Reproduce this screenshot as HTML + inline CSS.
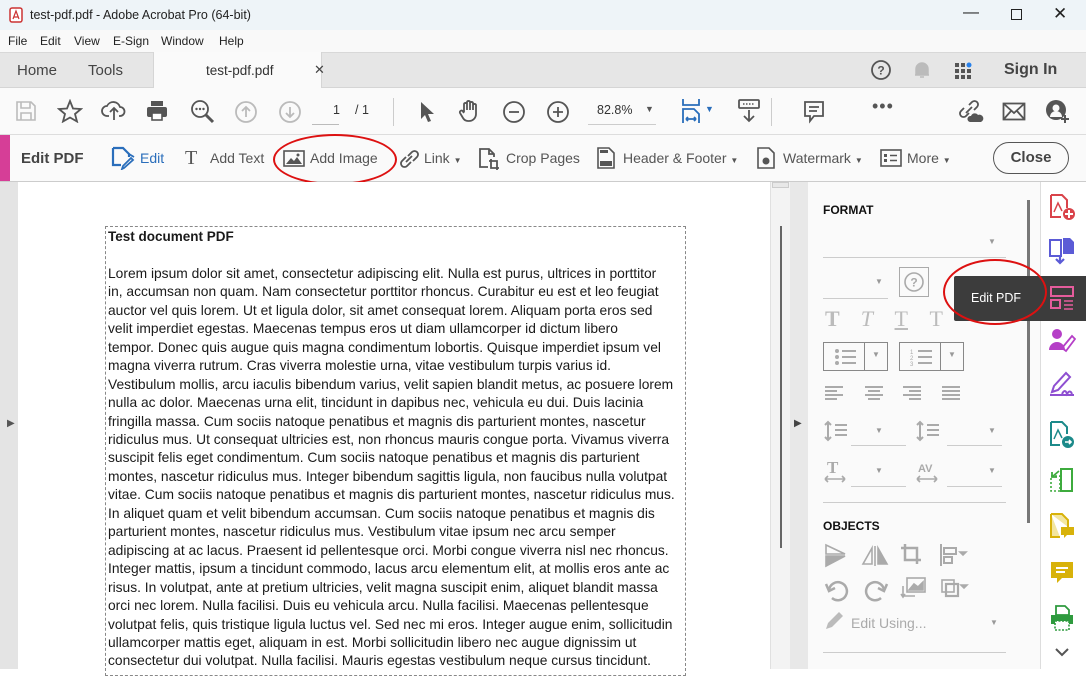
<!DOCTYPE html>
<html><head><meta charset="utf-8"><style>
*{box-sizing:border-box;margin:0;padding:0}
body{width:1086px;height:669px;overflow:hidden;font-family:"Liberation Sans",sans-serif;background:#fff;position:relative;color:#333}
.abs{position:absolute}
.title{left:0;top:0;width:1086px;height:30px;background:#eef4f8;font-size:12.5px;color:#222}
.menu{left:0;top:30px;width:1086px;height:22px;background:#f9f9f9;font-size:12px;color:#222}
.tabs{left:0;top:52px;width:1086px;height:36px;background:#e6e6e6;border-top:1px solid #d8d8d8;border-bottom:1px solid #d5d5d5}
.tb{left:0;top:88px;width:1086px;height:47px;background:#fafafa;border-bottom:1px solid #ddd}
.eb{left:0;top:135px;width:1086px;height:47px;background:#fafafa;border-bottom:1px solid #ccc;font-size:14px;color:#555}
.ic{stroke:#555;fill:none;stroke-width:1.8}
.doc{left:18px;top:182px;width:752px;height:487px;background:#fff}
.lines{left:108px;top:228px;font-size:13.8px;line-height:18.45px;color:#1a1a1a;white-space:nowrap;letter-spacing:0}
.panel{left:808px;top:182px;width:232px;height:487px;background:#fafafa}
</style></head><body>
<div class="abs title">
 <svg class="abs" style="left:9px;top:7px" width="14" height="16"><rect x="1" y="1" width="12" height="14" rx="2" fill="#fff" stroke="#c33" stroke-width="1.5"/><path d="M4 12 L7 4 L10 12 M5 10 H9" stroke="#c33" fill="none" stroke-width="1.2"/></svg>
 <span class="abs" style="left:30px;top:8px">test-pdf.pdf - Adobe Acrobat Pro (64-bit)</span>
 <span class="abs" style="left:963px;top:4px;font-size:16px">—</span>
 <span class="abs" style="left:1011px;top:9px;width:11px;height:11px;border:1.3px solid #222"></span>
 <span class="abs" style="left:1053px;top:4px;font-size:17px">✕</span>
</div>
<div class="abs menu">
 <span class="abs" style="left:8px;top:4px">File</span><span class="abs" style="left:40px;top:4px">Edit</span><span class="abs" style="left:74px;top:4px">View</span><span class="abs" style="left:113px;top:4px">E-Sign</span><span class="abs" style="left:161px;top:4px">Window</span><span class="abs" style="left:219px;top:4px">Help</span>
</div>
<div class="abs tabs">
 <span class="abs" style="left:17px;top:9px;font-size:15px;color:#444">Home</span>
 <span class="abs" style="left:88px;top:9px;font-size:15px;color:#444">Tools</span>
 <div class="abs" style="left:153px;top:-1px;width:169px;height:36px;background:#fafafa;border-left:1px solid #d5d5d5;border-right:1px solid #d5d5d5"></div>
 <span class="abs" style="left:206px;top:10px;font-size:13.5px;color:#333">test-pdf.pdf</span>
 <span class="abs" style="left:314px;top:9px;font-size:13px;color:#444">✕</span>
 <svg class="abs" style="left:870px;top:6px" width="22" height="22"><circle cx="11" cy="11" r="9" fill="none" stroke="#555" stroke-width="1.8"/><text x="11" y="15.5" text-anchor="middle" font-size="12" font-weight="bold" fill="#555" font-family="Liberation Sans">?</text></svg>
 <svg class="abs" style="left:913px;top:7px" width="18" height="20"><path d="M3 15 V9 a6 6 0 0 1 12 0 V15 Z M2 15 H16 M7 17 h4" fill="#bbb" stroke="#bbb" stroke-width="1.5"/></svg>
 <svg class="abs" style="left:953px;top:7px" width="22" height="20"><g fill="#555"><rect x="2" y="3" width="4" height="4"/><rect x="8" y="3" width="4" height="4"/><rect x="2" y="9" width="4" height="4"/><rect x="8" y="9" width="4" height="4"/><rect x="14" y="9" width="4" height="4"/><rect x="2" y="15" width="4" height="4"/><rect x="8" y="15" width="4" height="4"/><rect x="14" y="15" width="4" height="4"/></g><circle cx="16" cy="5" r="2.5" fill="#2680eb"/></svg>
 <span class="abs" style="left:1004px;top:8px;font-size:16px;font-weight:bold;color:#444">Sign In</span>
</div>
<div class="abs tb">
 <svg class="abs" style="left:15px;top:12px" width="22" height="22"><path d="M2 2 H16 L20 6 V20 H2 Z M6 2 V8 H15 V2 M6 20 V13 H16 V20" fill="none" stroke="#bbb" stroke-width="1.6"/></svg>
 <svg class="abs" style="left:57px;top:11px" width="26" height="24"><path d="M13 2 L16 9.5 L24 10 L18 15 L20 22.5 L13 18.5 L6 22.5 L8 15 L2 10 L10 9.5 Z" class="ic"/></svg>
 <svg class="abs" style="left:101px;top:12px" width="26" height="22"><path d="M8 16 H6 a5 5 0 0 1 0-10 a7 7 0 0 1 13 1 a4.5 4.5 0 0 1 0 9 H18 M13 20 V9 M9 12 L13 8 L17 12" class="ic"/></svg>
 <svg class="abs" style="left:145px;top:11px" width="24" height="24"><path d="M6 2 H18 V7 H6 Z" fill="#555"/><rect x="2" y="8" width="20" height="10" rx="2" fill="#555"/><rect x="7" y="14" width="10" height="7" fill="#fff" stroke="#555" stroke-width="1.6"/></svg>
 <svg class="abs" style="left:190px;top:11px" width="26" height="26"><circle cx="10" cy="10" r="8" class="ic" stroke-width="2.2"/><path d="M16 16 L23 23" stroke="#555" stroke-width="3"/><circle cx="6.5" cy="10" r="1.2" fill="#555"/><circle cx="10" cy="10" r="1.2" fill="#555"/><circle cx="13.5" cy="10" r="1.2" fill="#555"/></svg>
 <svg class="abs" style="left:234px;top:12px" width="24" height="24"><circle cx="12" cy="12" r="10" fill="none" stroke="#bbb" stroke-width="1.8"/><path d="M12 17 V7 M8 11 L12 7 L16 11" fill="none" stroke="#bbb" stroke-width="1.8"/></svg>
 <svg class="abs" style="left:278px;top:12px" width="24" height="24"><circle cx="12" cy="12" r="10" fill="none" stroke="#bbb" stroke-width="1.8"/><path d="M12 7 V17 M8 13 L12 17 L16 13" fill="none" stroke="#bbb" stroke-width="1.8"/></svg>
 <span class="abs" style="left:333px;top:15px;font-size:12.5px;color:#333">1</span>
 <div class="abs" style="left:312px;top:36px;width:27px;border-top:1px solid #bbb"></div>
 <span class="abs" style="left:355px;top:15px;font-size:12.5px;color:#333">/ 1</span>
 <div class="abs" style="left:393px;top:10px;height:28px;border-left:1px solid #ccc"></div>
 <svg class="abs" style="left:418px;top:12px" width="18" height="24"><path d="M3 2 L3 19 L7 15 L10 22 L13 21 L10 14 L16 14 Z" fill="#555"/></svg>
 <svg class="abs" style="left:457px;top:10px" width="26" height="26"><path d="M7 14 V6 a1.6 1.6 0 0 1 3 0 V12 V4 a1.6 1.6 0 0 1 3 0 V12 V5 a1.6 1.6 0 0 1 3 0 V12 V7 a1.6 1.6 0 0 1 3 0 V16 a7 7 0 0 1-7 7 h-1 a6 6 0 0 1-5-3 L3 15 a1.6 1.6 0 0 1 3-1.5 L7 15" class="ic" stroke-width="1.6"/></svg>
 <svg class="abs" style="left:502px;top:12px" width="24" height="24"><circle cx="12" cy="12" r="10" class="ic"/><path d="M7 12 H17" class="ic"/></svg>
 <svg class="abs" style="left:546px;top:12px" width="24" height="24"><circle cx="12" cy="12" r="10" class="ic"/><path d="M7 12 H17 M12 7 V17" class="ic"/></svg>
 <span class="abs" style="left:597px;top:15px;font-size:12.5px;color:#333">82.8%</span>
 <span class="abs" style="left:645px;top:16px;font-size:9px;color:#555">▼</span>
 <div class="abs" style="left:588px;top:36px;width:68px;border-top:1px solid #ccc"></div>
 <svg class="abs" style="left:681px;top:10px" width="22" height="26"><path d="M2 1 V7 H18 V1 M2 25 V11 H13 L18 16 V25 M5 21 H15 M5 21 l2-2 M5 21 l2 2 M15 21 l-2-2 M15 21 l-2 2" fill="none" stroke="#2a6ebb" stroke-width="1.8"/></svg>
 <span class="abs" style="left:705px;top:16px;font-size:9px;color:#2a6ebb">▼</span>
 <svg class="abs" style="left:737px;top:10px" width="24" height="26"><rect x="2" y="2" width="20" height="8" rx="1" fill="none" stroke="#555" stroke-width="1.8"/><path d="M6 6 h12" stroke="#555" stroke-dasharray="1.5 1.5" stroke-width="1.5"/><path d="M12 12 V23 M7 18 L12 23 L17 18" class="ic"/></svg>
 <div class="abs" style="left:771px;top:10px;height:28px;border-left:1px solid #ccc"></div>
 <svg class="abs" style="left:803px;top:12px" width="22" height="24"><path d="M2 2 H20 V16 H11 L7 21 V16 H2 Z M6 7 H16 M6 11 H14" class="ic"/></svg>
 <span class="abs" style="left:872px;top:8px;font-size:18px;color:#555;letter-spacing:1px">•••</span>
 <svg class="abs" style="left:956px;top:11px" width="28" height="26"><path d="M10 14 L16 8 M8 9 L5 12 a3.5 3.5 0 0 0 5 5 L13 14 M13 6 L16 3 a3.5 3.5 0 0 1 5 5 L18 11" class="ic"/><path d="M14 23 a3 3 0 0 1 1-6 a4 4 0 0 1 7-1 a3.5 3.5 0 0 1 3 7 Z" fill="#555"/></svg>
 <svg class="abs" style="left:1002px;top:14px" width="24" height="20"><rect x="1.5" y="1.5" width="21" height="16" fill="none" stroke="#555" stroke-width="1.8"/><path d="M1.5 1.5 L12 11 L22.5 1.5 M1.5 17.5 L9 9 M22.5 17.5 L15 9" class="ic" stroke-width="1.5"/></svg>
 <svg class="abs" style="left:1045px;top:11px" width="26" height="26"><circle cx="11" cy="11" r="10" fill="#555"/><circle cx="11" cy="9" r="3.5" fill="#fafafa"/><path d="M5 18 a6 6 0 0 1 12 0" fill="#fafafa"/><path d="M20 16 V24 M16 20 H24" stroke="#555" stroke-width="2"/></svg>
</div>
<div class="abs eb">
 <div class="abs" style="left:0;top:0;width:10px;height:46px;background:#d63e97"></div>
 <span class="abs" style="left:21px;top:15px;font-size:15px;font-weight:bold;color:#444">Edit PDF</span>
 <svg class="abs" style="left:110px;top:11px" width="26" height="24"><path d="M3 2 H13 L19 8 V11 M3 2 V19 H11" fill="none" stroke="#2a6ebb" stroke-width="2.2"/><path d="M19 8 L24 11 M14 22 L12 23 L13 20 L21 12 L23 14 Z" fill="none" stroke="#2a6ebb" stroke-width="1.8"/></svg>
 <span class="abs" style="left:140px;top:15px;color:#2a6ebb">Edit</span>
 <span class="abs" style="left:185px;top:12px;font-family:'Liberation Serif',serif;font-size:20px;color:#555">T</span>
 <span class="abs" style="left:210px;top:15px">Add Text</span>
 <svg class="abs" style="left:283px;top:15px" width="22" height="17"><rect x="1" y="1" width="20" height="15" fill="none" stroke="#555" stroke-width="1.6"/><path d="M3 14 L8 8 L11 11 L14 7 L19 14 Z" fill="#555"/><circle cx="15" cy="5" r="1.5" fill="#555"/></svg>
 <span class="abs" style="left:310px;top:15px">Add Image</span>
 <svg class="abs" style="left:398px;top:13px" width="22" height="22"><path d="M8 14 L14 8 M8 9 L4 13 a3.5 3.5 0 0 0 5 5 L13 14 M10 8 L14 4 a3.5 3.5 0 0 1 5 5 L15 13" class="ic"/></svg>
 <span class="abs" style="left:424px;top:15px">Link <span style="font-size:8px">▼</span></span>
 <svg class="abs" style="left:478px;top:12px" width="22" height="24"><path d="M10 20 H2 V2 H11 L16 7 V10 M11 2 V7 H16 M13 12 V21 H21 M11 14 H19 V23" class="ic" stroke-width="1.6"/></svg>
 <span class="abs" style="left:506px;top:15px">Crop Pages</span>
 <svg class="abs" style="left:597px;top:12px" width="18" height="22"><path d="M1 1 H12 L17 6 V21 H1 Z" fill="none" stroke="#555" stroke-width="1.6"/><rect x="3" y="14" width="12" height="5" fill="#555"/><rect x="3" y="3" width="8" height="3" fill="#555"/></svg>
 <span class="abs" style="left:623px;top:15px">Header &amp; Footer <span style="font-size:8px">▼</span></span>
 <svg class="abs" style="left:757px;top:12px" width="18" height="22"><path d="M1 1 H12 L17 6 V21 H1 Z" fill="none" stroke="#555" stroke-width="1.6"/><circle cx="9" cy="14" r="3.5" fill="#555"/></svg>
 <span class="abs" style="left:783px;top:15px">Watermark <span style="font-size:8px">▼</span></span>
 <svg class="abs" style="left:880px;top:14px" width="22" height="18"><rect x="1" y="1" width="20" height="16" fill="none" stroke="#555" stroke-width="1.6"/><rect x="4" y="5" width="3" height="3" fill="#555"/><rect x="4" y="10" width="3" height="3" fill="#555"/><path d="M10 6.5 H17 M10 11.5 H17" stroke="#555" stroke-width="1.6"/></svg>
 <span class="abs" style="left:907px;top:15px">More <span style="font-size:8px">▼</span></span>
 <div class="abs" style="left:993px;top:7px;width:76px;height:32px;border:1.3px solid #555;border-radius:16px;font-weight:bold;color:#444;font-size:15px;text-align:center;line-height:29px">Close</div>
 <div class="abs" style="left:273px;top:-1px;width:124px;height:51px;border:2px solid #d11;border-radius:50%"></div>
</div>
<div class="abs" style="left:0;top:182px;width:18px;height:487px;background:#e4e4e4"></div>
<span class="abs" style="left:7px;top:418px;font-size:10px;color:#555">▶</span>
<div class="abs doc"></div>
<div class="abs" style="left:105px;top:226px;width:581px;height:450px;border:1px dashed #888"></div>
<div class="abs lines">
<div style="font-weight:bold;font-size:13.5px">Test document PDF</div>
<div>&nbsp;</div>
<div>Lorem ipsum dolor sit amet, consectetur adipiscing elit. Nulla est purus, ultrices in porttitor</div>
<div>in, accumsan non quam. Nam consectetur porttitor rhoncus. Curabitur eu est et leo feugiat</div>
<div>auctor vel quis lorem. Ut et ligula dolor, sit amet consequat lorem. Aliquam porta eros sed</div>
<div>velit imperdiet egestas. Maecenas tempus eros ut diam ullamcorper id dictum libero</div>
<div>tempor. Donec quis augue quis magna condimentum lobortis. Quisque imperdiet ipsum vel</div>
<div>magna viverra rutrum. Cras viverra molestie urna, vitae vestibulum turpis varius id.</div>
<div>Vestibulum mollis, arcu iaculis bibendum varius, velit sapien blandit metus, ac posuere lorem</div>
<div>nulla ac dolor. Maecenas urna elit, tincidunt in dapibus nec, vehicula eu dui. Duis lacinia</div>
<div>fringilla massa. Cum sociis natoque penatibus et magnis dis parturient montes, nascetur</div>
<div>ridiculus mus. Ut consequat ultricies est, non rhoncus mauris congue porta. Vivamus viverra</div>
<div>suscipit felis eget condimentum. Cum sociis natoque penatibus et magnis dis parturient</div>
<div>montes, nascetur ridiculus mus. Integer bibendum sagittis ligula, non faucibus nulla volutpat</div>
<div>vitae. Cum sociis natoque penatibus et magnis dis parturient montes, nascetur ridiculus mus.</div>
<div>In aliquet quam et velit bibendum accumsan. Cum sociis natoque penatibus et magnis dis</div>
<div>parturient montes, nascetur ridiculus mus. Vestibulum vitae ipsum nec arcu semper</div>
<div>adipiscing at ac lacus. Praesent id pellentesque orci. Morbi congue viverra nisl nec rhoncus.</div>
<div>Integer mattis, ipsum a tincidunt commodo, lacus arcu elementum elit, at mollis eros ante ac</div>
<div>risus. In volutpat, ante at pretium ultricies, velit magna suscipit enim, aliquet blandit massa</div>
<div>orci nec lorem. Nulla facilisi. Duis eu vehicula arcu. Nulla facilisi. Maecenas pellentesque</div>
<div>volutpat felis, quis tristique ligula luctus vel. Sed nec mi eros. Integer augue enim, sollicitudin</div>
<div>ullamcorper mattis eget, aliquam in est. Morbi sollicitudin libero nec augue dignissim ut</div>
<div>consectetur dui volutpat. Nulla facilisi. Mauris egestas vestibulum neque cursus tincidunt.</div>
</div>
<div class="abs" style="left:770px;top:182px;width:20px;height:487px;background:#f3f3f3;border-left:1px solid #e0e0e0"></div>
<div class="abs" style="left:772px;top:182px;width:17px;height:6px;background:#e8e8e8;border:1px solid #ccc"></div>
<div class="abs" style="left:780px;top:226px;width:2px;height:322px;background:#666"></div>
<div class="abs" style="left:790px;top:182px;width:18px;height:487px;background:#e8e8e8"></div>
<span class="abs" style="left:794px;top:418px;font-size:10px;color:#444">▶</span>
<div class="abs panel">
 <span class="abs" style="left:15px;top:21px;font-size:12px;font-weight:bold;color:#111">FORMAT</span>
 <span class="abs" style="left:180px;top:55px;font-size:8px;color:#999">▼</span>
 <div class="abs" style="left:15px;top:75px;width:183px;border-top:1px solid #ccc"></div>
 <span class="abs" style="left:67px;top:95px;font-size:8px;color:#999">▼</span>
 <div class="abs" style="left:15px;top:116px;width:65px;border-top:1px solid #ccc"></div>
 <div class="abs" style="left:91px;top:85px;width:30px;height:30px;border:1px solid #aaa"></div>
 <svg class="abs" style="left:95px;top:89px" width="22" height="22"><circle cx="11" cy="11" r="9" fill="none" stroke="#aaa" stroke-width="1.6"/><text x="11" y="15.5" text-anchor="middle" font-size="12" font-weight="bold" fill="#aaa" font-family="Liberation Sans">?</text></svg>
 <div class="abs" style="left:17px;top:124px;font-family:'Liberation Serif',serif;font-size:22px;color:#bbb;font-weight:bold;word-spacing:16px">T <i style="font-weight:normal">T</i> <u style="font-weight:normal">T</u> <span style="font-weight:normal">T</span></div>
 <div class="abs" style="left:15px;top:160px;width:65px;height:29px;border:1px solid #888"></div><div class="abs" style="left:56px;top:160px;height:29px;border-left:1px solid #888"></div>
 <svg class="abs" style="left:26px;top:166px" width="24" height="18"><g fill="#aaa"><circle cx="3" cy="3" r="2"/><circle cx="3" cy="9" r="2"/><circle cx="3" cy="15" r="2"/><rect x="8" y="2" width="14" height="2"/><rect x="8" y="8" width="14" height="2"/><rect x="8" y="14" width="14" height="2"/></g></svg>
 <span class="abs" style="left:64px;top:168px;font-size:8px;color:#999">▼</span>
 <div class="abs" style="left:91px;top:160px;width:65px;height:29px;border:1px solid #888"></div><div class="abs" style="left:132px;top:160px;height:29px;border-left:1px solid #888"></div>
 <svg class="abs" style="left:102px;top:166px" width="24" height="18"><g fill="#aaa"><rect x="8" y="2" width="14" height="2"/><rect x="8" y="8" width="14" height="2"/><rect x="8" y="14" width="14" height="2"/><text x="0" y="6" font-size="6">1</text><text x="0" y="12" font-size="6">2</text><text x="0" y="18" font-size="6">3</text></g></svg>
 <span class="abs" style="left:140px;top:168px;font-size:8px;color:#999">▼</span>
 <svg class="abs" style="left:15px;top:203px" width="180" height="16"><g stroke="#aaa" stroke-width="2"><path d="M2 2 H20 M2 6 H14 M2 10 H20 M2 14 H14"/><path d="M42 2 H60 M45 6 H57 M42 10 H60 M45 14 H57"/><path d="M80 2 H98 M86 6 H98 M80 10 H98 M86 14 H98"/><path d="M119 2 H137 M119 6 H137 M119 10 H137 M119 14 H137"/></g></svg>
 <svg class="abs" style="left:15px;top:238px" width="30" height="22"><path d="M5 2 V20 M2 5 L5 2 L8 5 M2 17 L5 20 L8 17 M12 5 H24 M12 10 H24 M12 15 H24" stroke="#aaa" stroke-width="2" fill="none"/></svg>
 <span class="abs" style="left:67px;top:244px;font-size:8px;color:#999">▼</span>
 <div class="abs" style="left:43px;top:263px;width:55px;border-top:1px solid #ccc"></div>
 <svg class="abs" style="left:107px;top:238px" width="30" height="22"><path d="M5 2 V20 M2 5 L5 2 L8 5 M2 17 L5 20 L8 17 M12 5 H24 M12 10 H24 M12 15 H24" stroke="#aaa" stroke-width="2" fill="none"/></svg>
 <span class="abs" style="left:180px;top:244px;font-size:8px;color:#999">▼</span>
 <div class="abs" style="left:139px;top:263px;width:55px;border-top:1px solid #ccc"></div>
 <svg class="abs" style="left:15px;top:277px" width="26" height="24"><text x="4" y="14" font-family="Liberation Serif" font-weight="bold" font-size="17" fill="#aaa">T</text><path d="M2 20 H22 M2 20 l3-3 M2 20 l3 3 M22 20 l-3-3 M22 20 l-3 3" stroke="#aaa" stroke-width="1.6" fill="none"/></svg>
 <span class="abs" style="left:67px;top:284px;font-size:8px;color:#999">▼</span>
 <div class="abs" style="left:43px;top:304px;width:55px;border-top:1px solid #ccc"></div>
 <svg class="abs" style="left:107px;top:277px" width="26" height="24"><text x="3" y="13" font-family="Liberation Sans" font-weight="bold" font-size="11" fill="#aaa">AV</text><path d="M2 20 H22 M2 20 l3-3 M2 20 l3 3 M22 20 l-3-3 M22 20 l-3 3" stroke="#aaa" stroke-width="1.6" fill="none"/></svg>
 <span class="abs" style="left:180px;top:284px;font-size:8px;color:#999">▼</span>
 <div class="abs" style="left:139px;top:304px;width:55px;border-top:1px solid #ccc"></div>
 <div class="abs" style="left:15px;top:320px;width:183px;border-top:1px solid #ccc"></div>
 <span class="abs" style="left:15px;top:337px;font-size:12px;font-weight:bold;color:#111">OBJECTS</span>
 <svg class="abs" style="left:15px;top:360px" width="200" height="90"><g fill="#aaa" stroke="#aaa" stroke-width="1.6">
  <path d="M3 3 L22 12 H3 Z" fill="none"/><path d="M3 14 H22 L3 24 Z"/>
  <path d="M52 4 V24 M49 22 L49 6 L40 22 Z" fill="none"/><path d="M55 6 V22 H64 Z"/>
  <path d="M82 2 V18 H98 M78 6 H94 V22" fill="none" stroke-width="2.5"/>
  <path d="M118 2 V24 M121 6 H133 V12 H121 Z M121 15 H129 V21 H121 Z" fill="none" stroke-width="2"/><path d="M137 10 l3 3 l3 -3Z"/>
  <path d="M6 48 a9 9 0 1 1 3 8 M3 42 L6 49 L12 46" fill="none" stroke-width="2.5"/>
  <path d="M61 48 a9 9 0 1 0 -3 8 M64 42 L61 49 L55 46" fill="none" stroke-width="2.5"/>
  <rect x="84" y="36" width="18" height="14" fill="none"/><path d="M86 48 L91 42 L95 45 L100 40 V48 Z"/><path d="M80 44 V54 H92 M78 52 l2 3 l2 -3" fill="none"/>
  <rect x="119" y="38" width="12" height="12" fill="none"/><rect x="123" y="42" width="12" height="12" fill="none" stroke-width="2.2"/><path d="M138 43 l3 3 l3 -3Z"/>
 </g></svg>
 <svg class="abs" style="left:15px;top:428px" width="22" height="22"><path d="M3 19 L5 13 L16 2 L20 6 L9 17 Z" fill="#bbb"/></svg>
 <span class="abs" style="left:43px;top:433px;font-size:14px;color:#aaa">Edit Using...</span>
 <span class="abs" style="left:182px;top:436px;font-size:8px;color:#999">▼</span>
 <div class="abs" style="left:15px;top:470px;width:183px;border-top:1px solid #ccc"></div>
</div>
<div class="abs" style="left:1027px;top:200px;width:3px;height:323px;background:#777"></div>
<div class="abs" style="left:1040px;top:182px;width:46px;height:487px;background:#fff;border-left:1px solid #ddd"></div>
<svg class="abs" style="left:1048px;top:193px" width="30" height="30"><path d="M3 2 H14 L19 7 V15 M3 2 V24 H13" fill="none" stroke="#d9434a" stroke-width="2"/><path d="M6 19 L10 10 L14 18" fill="none" stroke="#d9434a" stroke-width="1.5"/><circle cx="21" cy="21" r="6" fill="#d9434a"/><path d="M21 17 V25 M17 21 H25" stroke="#fff" stroke-width="2"/></svg>
<svg class="abs" style="left:1048px;top:236px" width="28" height="30"><path d="M2 4 H13 V20 H2 Z" fill="none" stroke="#5b5bd6" stroke-width="2"/><path d="M15 2 H22 L26 6 V18 H15 Z" fill="#5b5bd6"/><path d="M12 19 V26 M8 23 L12 27 L16 23" fill="none" stroke="#5b5bd6" stroke-width="2.2"/></svg>
<div class="abs" style="left:954px;top:276px;width:132px;height:45px;background:#3c3c3c;border-radius:2px 0 0 2px"></div>
<span class="abs" style="left:971px;top:291px;font-size:12.5px;color:#fff">Edit PDF</span>
<svg class="abs" style="left:1048px;top:284px" width="28" height="28"><rect x="3" y="3" width="22" height="9" fill="none" stroke="#e55c9c" stroke-width="2"/><rect x="3" y="16" width="9" height="8" fill="none" stroke="#e55c9c" stroke-width="2"/><path d="M16 17 H25 M16 21 H25 M16 25 H25" stroke="#e55c9c" stroke-width="1.5"/></svg>
<div class="abs" style="left:943px;top:259px;width:104px;height:66px;border:2px solid #d11;border-radius:50%"></div>
<svg class="abs" style="left:1048px;top:326px" width="28" height="28"><circle cx="9" cy="8" r="5" fill="#b53fc7"/><path d="M1 24 a8 8 0 0 1 16 0 Z" fill="#b53fc7"/><path d="M14 22 L24 10 L27 13 L18 25 Z" fill="none" stroke="#b53fc7" stroke-width="1.8"/></svg>
<svg class="abs" style="left:1048px;top:370px" width="28" height="28"><path d="M4 22 L6 16 L18 3 L22 7 L10 20 Z" fill="none" stroke="#8e4fd1" stroke-width="2"/><path d="M2 25 H26 M14 24 q3-6 5 0 q3-5 5 0" fill="none" stroke="#8e4fd1" stroke-width="2"/></svg>
<svg class="abs" style="left:1048px;top:420px" width="28" height="30"><path d="M3 2 H14 L19 7 V14 M3 2 V25 H12" fill="none" stroke="#1c8a8a" stroke-width="2"/><path d="M6 19 L10 10 L14 18" fill="none" stroke="#1c8a8a" stroke-width="1.5"/><circle cx="20" cy="22" r="6" fill="#1c8a8a"/><path d="M17 22 H23 M21 20 L23 22 L21 24" stroke="#fff" stroke-width="1.6" fill="none"/></svg>
<svg class="abs" style="left:1048px;top:466px" width="28" height="28"><rect x="13" y="3" width="11" height="22" fill="none" stroke="#3eab3e" stroke-width="2"/><rect x="3" y="10" width="9" height="15" fill="none" stroke="#3eab3e" stroke-width="1.6" stroke-dasharray="2 2"/><path d="M11 5 L4 11 M4 6 V11 H9" fill="none" stroke="#3eab3e" stroke-width="1.8"/></svg>
<svg class="abs" style="left:1048px;top:512px" width="28" height="30"><path d="M3 2 H14 L20 8 V15 M3 2 V25 H12" fill="#f3e6a0" stroke="#d8b20a" stroke-width="2"/><path d="M13 15 H26 V23 H19 L16 26 V23 H13 Z" fill="#d8b20a"/></svg>
<svg class="abs" style="left:1048px;top:559px" width="28" height="28"><path d="M3 3 H25 V19 H14 L9 24 V19 H3 Z" fill="#d8b20a"/><path d="M8 9 H20 M8 13 H17" stroke="#fff" stroke-width="2"/></svg>
<svg class="abs" style="left:1048px;top:604px" width="28" height="28"><path d="M8 2 H17 L21 6 V11 H8 Z" fill="none" stroke="#2e9a3e" stroke-width="1.8"/><rect x="3" y="11" width="22" height="9" fill="#2e9a3e"/><rect x="7" y="17" width="14" height="9" fill="#fff" stroke="#2e9a3e" stroke-width="1.6" stroke-dasharray="2 1.5"/></svg>
<svg class="abs" style="left:1053px;top:646px" width="18" height="12"><path d="M3 3 L9 9 L15 3" fill="none" stroke="#555" stroke-width="2"/></svg>
</body></html>
